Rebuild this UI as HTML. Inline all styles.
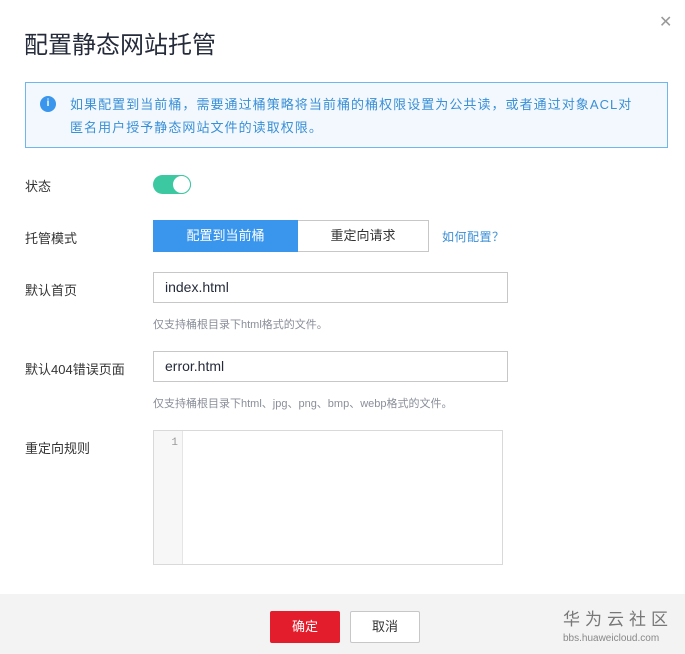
<!DOCTYPE html>
<html><head><meta charset="utf-8"><style>
*{box-sizing:border-box;margin:0;padding:0}
body{width:685px;height:654px;background:#fff;font-family:"Liberation Sans","Noto Sans CJK SC",sans-serif;color:#252b3a;position:relative;overflow:hidden;font-size:13px}
.a{position:absolute}
.lbl{position:absolute;left:25px;font-size:13px;color:#333}
.inp{position:absolute;left:153px;width:355px;height:31px;border:1px solid #c7c7c7;padding-left:11px;line-height:29px;font-size:14px;color:#252b3a}
.hint{position:absolute;left:153px;font-size:11px;color:#8a8e99}
</style></head><body>
<div class="a" style="left:24px;top:25px;font-size:24px;color:#252b3a">配置静态网站托管</div>
<div class="a" style="left:659px;top:12px;font-size:16px;color:#999">✕</div>
<div class="a" style="left:25px;top:82px;width:643px;height:66px;border:1px solid #6fb6ee;background:#f2f8fd"></div>
<div class="a" style="left:40px;top:96px;width:16px;height:16px;border-radius:50%;background:#3a95ed;color:#fff;font-size:10px;text-align:center;line-height:16px;font-weight:bold">i</div>
<div class="a" style="left:70px;top:93px;font-size:13px;color:#3a8fd6;line-height:23px;width:595px;letter-spacing:1.05px">如果配置到当前桶，需要通过桶策略将当前桶的桶权限设置为公共读，或者通过对象ACL对<br>匿名用户授予静态网站文件的读取权限。</div>
<div class="lbl" style="top:176px">状态</div>
<div class="a" style="left:153px;top:175px;width:38px;height:19px;border-radius:10px;background:#3cc8a0"></div>
<div class="a" style="left:172px;top:175px;width:19px;height:19px;border-radius:50%;background:#fff;border:1px solid #3cc8a0"></div>
<div class="lbl" style="top:228px">托管模式</div>
<div class="a" style="left:153px;top:220px;width:145px;height:32px;background:#3a95ed;color:#fff;text-align:center;line-height:32px;font-size:13px">配置到当前桶</div>
<div class="a" style="left:298px;top:220px;width:131px;height:32px;border:1px solid #c7c7c7;border-left:none;text-align:center;line-height:30px;font-size:13px;color:#333">重定向请求</div>
<div class="a" style="left:442px;top:228px;font-size:12px;color:#3a8fd6;letter-spacing:0.5px">如何配置？</div>
<div class="lbl" style="top:280px">默认首页</div>
<div class="inp" style="top:272px">index.html</div>
<div class="hint" style="top:316px">仅支持桶根目录下html格式的文件。</div>
<div class="lbl" style="top:359px">默认404错误页面</div>
<div class="inp" style="top:351px">error.html</div>
<div class="hint" style="top:395px">仅支持桶根目录下html、jpg、png、bmp、webp格式的文件。</div>
<div class="lbl" style="top:438px">重定向规则</div>
<div class="a" style="left:153px;top:430px;width:350px;height:135px;border:1px solid #d9d9d9"></div>
<div class="a" style="left:154px;top:431px;width:29px;height:133px;background:#f7f7f7;border-right:1px solid #e5e5e5;text-align:right;padding-right:4px;font-family:'Liberation Mono',monospace;font-size:11px;color:#999;padding-top:6px">1</div>
<div class="a" style="left:0;top:594px;width:685px;height:60px;background:#f3f3f3"></div>
<div class="a" style="left:270px;top:611px;width:70px;height:32px;background:#e31d2b;border-radius:2px;color:#fff;text-align:center;line-height:32px;font-size:13px">确定</div>
<div class="a" style="left:350px;top:611px;width:70px;height:32px;background:#fff;border:1px solid #c7c7c7;border-radius:2px;color:#333;text-align:center;line-height:30px;font-size:13px">取消</div>
<div class="a" style="left:563px;top:611px;font-size:17px;line-height:18px;color:#777;letter-spacing:5px">华为云社区</div>
<div class="a" style="left:563px;top:633px;font-size:10px;line-height:12px;color:#888">bbs.huaweicloud.com</div>
</body></html>
